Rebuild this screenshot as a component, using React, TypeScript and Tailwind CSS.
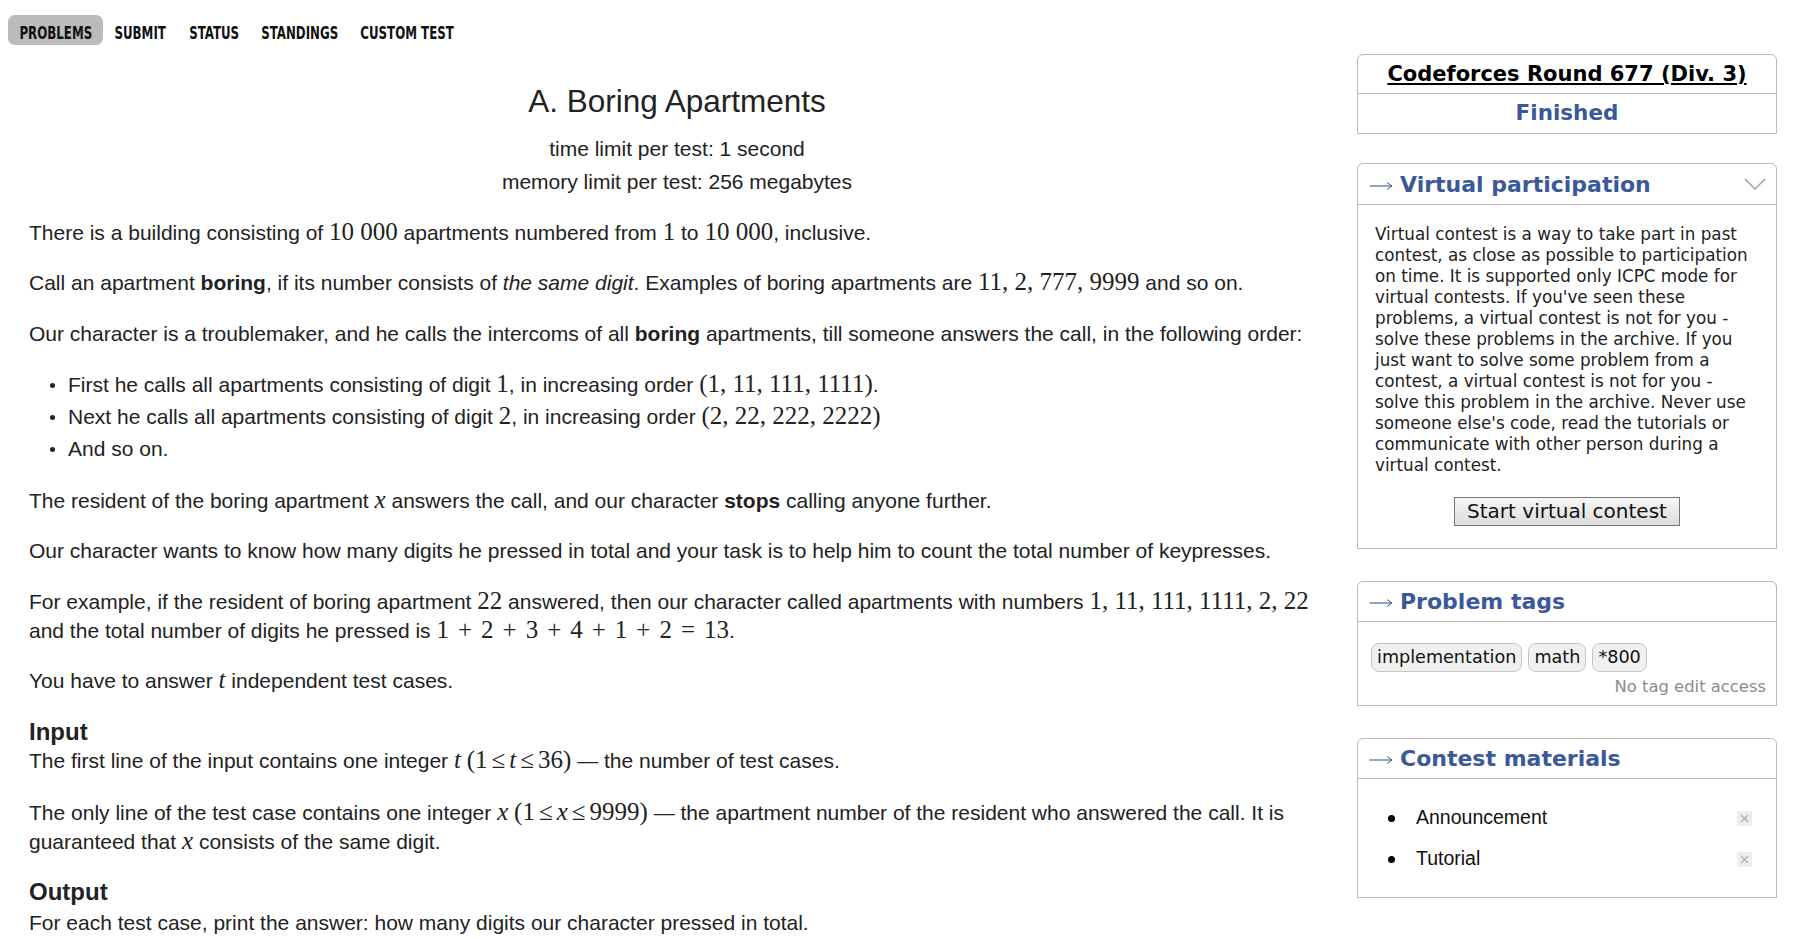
import React, { ReactNode } from 'react';

const M = ({ children, i }: { children: ReactNode; i?: boolean }) => (
  <span className={`font-['Liberation_Serif',serif] text-[25px] leading-none ${i ? 'italic' : ''}`}>{children}</span>
);

// binary operator / relation spacing inside math
const Op = ({ children, rel }: { children: ReactNode; rel?: boolean }) => (
  <span className={rel ? 'mx-[4px]' : 'mx-[9px]'}>{children}</span>
);

const navItems = [
  { label: 'PROBLEMS', w: 'w-[95px]' },
  { label: 'SUBMIT', w: 'w-[73px]' },
  { label: 'STATUS', w: 'w-[72px]' },
  { label: 'STANDINGS', w: 'w-[98px]' },
  { label: 'CUSTOM TEST', w: 'w-[114px]' },
];

const vcLines = [
  'Virtual contest is a way to take part in past',
  'contest, as close as possible to participation',
  'on time. It is supported only ICPC mode for',
  "virtual contests. If you've seen these",
  'problems, a virtual contest is not for you -',
  'solve these problems in the archive. If you',
  'just want to solve some problem from a',
  'contest, a virtual contest is not for you -',
  'solve this problem in the archive. Never use',
  "someone else's code, read the tutorials or",
  'communicate with other person during a',
  'virtual contest.',
];

function BoxTitle({ title, chevron, h = 'h-[41px]' }: { title: string; chevron?: boolean; h?: string }) {
  return (
    <div className={`flex ${h} items-center border-b border-[#b9b9b9] pl-[11px] pr-[10px]`}>
      <svg width="24" height="10" viewBox="0 0 24 10" className="mt-[3px]">
        <line x1="0.5" y1="5" x2="22.5" y2="5" stroke="#3b5998" strokeWidth="1.1" />
        <polyline points="18,1.5 23,5 18,8.5" fill="none" stroke="#3b5998" strokeWidth="1" />
      </svg>
      <span className="ml-[7px] text-[22px] font-bold text-[#3b5998]">{title}</span>
      {chevron && (
        <svg className="ml-auto" width="22" height="13" viewBox="0 0 22 13">
          <polyline points="1,1 11,11 21,1" fill="none" stroke="#9a9a9a" strokeWidth="1.4" />
        </svg>
      )}
    </div>
  );
}

function Li({ children }: { children: ReactNode }) {
  return (
    <div className="flex items-center leading-[32px]">
      <span className="ml-[21px] mr-[13px] h-[5px] w-[5px] rounded-full bg-[#222]" />
      <span>{children}</span>
    </div>
  );
}

export default function App() {
  return (
    <div className="flex min-h-[939px] w-[1805px] bg-white text-[#222]">
      {/* Left column */}
      <div className="w-[1325px] shrink-0">
        {/* Menu */}
        <div className="ml-[8px] mt-[15px] flex gap-[1px] font-['DejaVu_Sans_Condensed','DejaVu_Sans',sans-serif] text-[18px] font-bold text-[#111]">
          {navItems.map((n, i) => (
            <div
              key={n.label}
              className={`flex h-[30px] ${n.w} items-center justify-center rounded-[7px] pt-[5px] ${i === 0 ? 'bg-[#bbbbbb]' : ''}`}
            >
              <span className="inline-block scale-x-[0.73] whitespace-nowrap leading-none">{n.label}</span>
            </div>
          ))}
        </div>

        {/* Statement */}
        <div className="ml-[29px] font-['Liberation_Sans',Arial,sans-serif] text-[21px]">
          <div className="mt-[38px] text-center text-[31.5px] leading-[36px]">A. Boring Apartments</div>
          <div className="mt-[14px] text-center leading-[32.5px]">
            <div>time limit per test: 1 second</div>
            <div>memory limit per test: 256 megabytes</div>
          </div>

          <div className="mt-[19.5px] leading-[29px]">
            <p className="mb-[21.5px]">
              There is a building consisting of <M>10 000</M> apartments numbered from <M>1</M> to <M>10 000</M>, inclusive.
            </p>
            <p className="mb-[21.5px]">
              Call an apartment <b>boring</b>, if its number consists of <i>the same digit</i>. Examples of boring apartments are{' '}
              <M>11, 2, 777, 9999</M> and so on.
            </p>
            <p className="mb-[21.5px]">
              Our character is a troublemaker, and he calls the intercoms of all <b>boring</b> apartments, till someone answers the call, in the
              following order:
            </p>
            <div className="mb-[20.5px]">
              <Li>
                First he calls all apartments consisting of digit <M>1</M>, in increasing order <M>(1, 11, 111, 1111)</M>.
              </Li>
              <Li>
                Next he calls all apartments consisting of digit <M>2</M>, in increasing order <M>(2, 22, 222, 2222)</M>
              </Li>
              <Li>And so on.</Li>
            </div>
            <p className="mb-[21.5px]">
              The resident of the boring apartment <M i>x</M> answers the call, and our character <b>stops</b> calling anyone further.
            </p>
            <p className="mb-[21.5px]">
              Our character wants to know how many digits he pressed in total and your task is to help him to count the total number of
              keypresses.
            </p>
            <p className="mb-[21.5px]">
              For example, if the resident of boring apartment <M>22</M> answered, then our character called apartments with numbers{' '}
              <M>1, 11, 111, 1111, 2, 22</M> and the total number of digits he pressed is{' '}
              <M>
                1<Op>+</Op>2<Op>+</Op>3<Op>+</Op>4<Op>+</Op>1<Op>+</Op>2<Op>=</Op>13
              </M>
              .
            </p>
            <p className="mb-[21.5px]">
              You have to answer <M i>t</M> independent test cases.
            </p>

            <div className="mt-[5px] text-[24px] font-bold leading-[29px]">Input</div>
            <p className="mb-[23px]">
              The first line of the input contains one integer <M i>t</M>{' '}
              <M>
                (1<Op rel>≤</Op>
                <i>t</i>
                <Op rel>≤</Op>36)
              </M>{' '}
              — the number of test cases.
            </p>
            <p className="mb-[21.5px]">
              The only line of the test case contains one integer <M i>x</M>{' '}
              <M>
                (1<Op rel>≤</Op>
                <i>x</i>
                <Op rel>≤</Op>9999)
              </M>{' '}
              — the apartment number of the resident who answered the call. It is guaranteed that <M i>x</M> consists of the same digit.
            </p>

            <div className="mt-[2px] text-[24px] font-bold leading-[29px]">Output</div>
            <p className="mt-[2px]">For each test case, print the answer: how many digits our character pressed in total.</p>
          </div>
        </div>
      </div>

      {/* Sidebar */}
      <div className="ml-[32px] mt-[54px] flex w-[420px] shrink-0 flex-col font-['DejaVu_Sans',Verdana,sans-serif] text-[#222]">
        {/* Contest name */}
        <div className="rounded-t-[6px] border border-[#b9b9b9]">
          <div className="flex h-[39px] items-center justify-center border-b border-[#b9b9b9] pt-[2px] text-[21px] font-bold text-black underline">
            Codeforces Round 677 (Div. 3)
          </div>
          <div className="flex h-[39px] items-center justify-center text-[21.5px] font-bold text-[#3b5998]">Finished</div>
        </div>

        {/* Virtual participation */}
        <div className="mt-[29px] rounded-t-[6px] border border-[#b9b9b9]">
          <BoxTitle title="Virtual participation" chevron />
          <div className="px-[17px] pb-[22px] pt-[18.5px]">
            <div className="text-[16.8px] leading-[21px]">
              {vcLines.map((l) => (
                <div key={l} className="whitespace-nowrap">
                  {l}
                </div>
              ))}
            </div>
            <div className="mt-[21px] flex justify-center">
              <button className="h-[29px] w-[226px] border border-[#777] bg-gradient-to-b from-[#f6f6f6] to-[#dcdcdc] text-[20px] leading-none text-[#111]">
                Start virtual contest
              </button>
            </div>
          </div>
        </div>

        {/* Problem tags */}
        <div className="mt-[32px] rounded-t-[6px] border border-[#b9b9b9]">
          <BoxTitle title="Problem tags" h="h-[40px]" />
          <div className="pb-[8px] pl-[13px] pr-[10px] pt-[21px]">
            <div className="flex gap-[6px]">
              {['implementation', 'math', '*800'].map((t) => (
                <span
                  key={t}
                  className="flex h-[29px] items-center rounded-[8px] border border-[#c4c4c4] bg-[#f0f0f0] px-[5px] text-[17.6px] text-[#111]"
                >
                  {t}
                </span>
              ))}
            </div>
            <div className="mt-[5px] text-right text-[16.4px] leading-[20px] text-[#8c8c8c]">No tag edit access</div>
          </div>
        </div>

        {/* Contest materials */}
        <div className="mt-[32px] rounded-t-[6px] border border-[#b9b9b9]">
          <BoxTitle title="Contest materials" h="h-[40px]" />
          <div className="pb-[17px] pt-[19px] font-['Liberation_Sans',Arial,sans-serif] text-[19.5px] text-[#111]">
            {['Announcement', 'Tutorial'].map((m) => (
              <div key={m} className="flex h-[41px] items-center pl-[30px] pr-[24px]">
                <span className="h-[7px] w-[7px] rounded-full bg-black" />
                <span className="ml-[21px]">{m}</span>
                <span className="ml-auto flex h-[15px] w-[15px] items-center justify-center bg-[#eeeeee]">
                  <svg width="9" height="9" viewBox="0 0 9 9">
                    <path d="M1 1L8 8M8 1L1 8" stroke="#b4b4b4" strokeWidth="1.6" />
                  </svg>
                </span>
              </div>
            ))}
          </div>
        </div>
      </div>
    </div>
  );
}
